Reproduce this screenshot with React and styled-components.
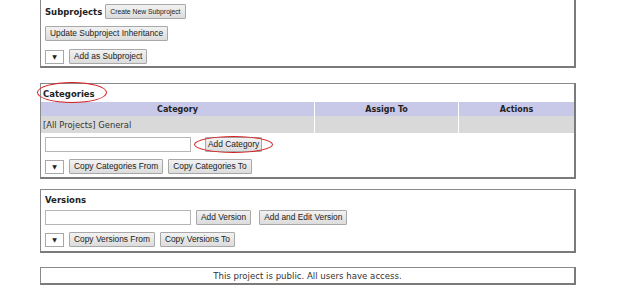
import styled, { createGlobalStyle } from "styled-components";

const GlobalStyle = createGlobalStyle`
  html, body {
    margin: 0;
    padding: 0;
    background: #fff;
  }
  body {
    font-family: "DejaVu Sans", Verdana, sans-serif;
    color: #222;
  }
`;

const Page = styled.div`
  width: 635px;
  height: 297px;
  overflow: hidden;
  padding-left: 40px;
  box-sizing: border-box;
`;

const Stack = styled.div`
  display: flex;
  flex-direction: column;
  width: 536px;
  margin-top: -1px;
`;

const Box = styled.div`
  box-sizing: border-box;
  border: 1px solid #8a8a8a;
  border-right: 2px solid #7a7a7a;
  border-bottom: 2px solid #7a7a7a;
  height: ${(p) => p.$h}px;
  margin-top: ${(p) => p.$gap || 0}px;
  display: flex;
  flex-direction: column;
`;

const Title = styled.div`
  position: relative;
  font-weight: bold;
  font-size: 8.5px;
  padding: ${(p) => p.$pad || "4px 4px 0"};
  display: flex;
  align-items: center;
  gap: 3px;
  height: ${(p) => p.$h || 16}px;
  box-sizing: border-box;
`;

const Row = styled.div`
  display: flex;
  align-items: center;
  gap: ${(p) => p.$gap || 6}px;
  padding: 0 4px;
  margin-top: ${(p) => p.$mt || 0}px;
  height: 15px;
`;

const Button = styled.button`
  position: relative;
  font-family: "Liberation Sans", Arial, sans-serif;
  font-size: ${(p) => (p.$small ? "6.8px" : "8.4px")};
  color: #222;
  height: 15px;
  padding: 0 ${(p) => (p.$tight ? 2 : 4)}px;
  margin-left: ${(p) => p.$ml || 0}px;
  border: 1px solid #a8a8a8;
  border-radius: 1px;
  background: linear-gradient(#f2f2f2, #dcdcdc);
  white-space: nowrap;
  line-height: 13px;
`;

const Select = styled.div`
  width: 19px;
  height: 14px;
  box-sizing: border-box;
  border: 1px solid #a8a8a8;
  background: #fff;
  font-size: 6px;
  display: flex;
  align-items: center;
  justify-content: center;
  color: #222;
`;

const Input = styled.div`
  width: 146px;
  height: 15px;
  box-sizing: border-box;
  border: 1px solid #b5b5b5;
  background: #fff;
`;

const Table = styled.div`
  display: grid;
  grid-template-columns: 273px 143px 1fr;
  column-gap: 1px;
  margin-top: 1px;
`;

const HeadCell = styled.div`
  background: #c8c8e8;
  height: 14px;
  font-size: 8px;
  font-weight: bold;
  display: flex;
  align-items: center;
  justify-content: center;
`;

const Cell = styled.div`
  background: #d9d9d9;
  height: 17px;
  font-size: 8.4px;
  display: flex;
  align-items: center;
  padding-left: 2px;
  color: #333;
`;

const Oval = styled.span`
  position: absolute;
  left: ${(p) => p.$l}px;
  top: ${(p) => p.$t}px;
  width: ${(p) => p.$w}px;
  height: ${(p) => p.$hh}px;
  border: 1.5px solid #d42020;
  border-radius: 50%;
  pointer-events: none;
`;

const Notice = styled.div`
  font-size: 8.6px;
  color: #333;
  display: flex;
  align-items: center;
  justify-content: center;
  height: 100%;
`;

export default function App() {
  return (
    <Page>
      <GlobalStyle />
      <Stack>
        <Box $h={69}>
          <Title $h={20} $pad="3px 4px 0">
            Subprojects <Button $small>Create New Subproject</Button>
          </Title>
          <Row $mt={6}>
            <Button>Update Subproject Inheritance</Button>
          </Row>
          <Row $mt={8} $gap={5}>
            <Select>▼</Select>
            <Button>Add as Subproject</Button>
          </Row>
        </Box>

        <Box $h={96} $gap={15}>
          <Title $h={17} $pad="2px 2px 0">
            Categories
            <Oval $l={-4} $t={-2} $w={68} $hh={19} />
          </Title>
          <Table>
            <HeadCell>Category</HeadCell>
            <HeadCell>Assign To</HeadCell>
            <HeadCell>Actions</HeadCell>
            <Cell>[All Projects] General</Cell>
            <Cell />
            <Cell />
          </Table>
          <Row $mt={4} $gap={0}>
            <Input />
            <Button $ml={8} $tight>
              Add Category
              <Oval $l={-12} $t={-2} $w={77} $hh={15} />
            </Button>
          </Row>
          <Row $mt={7} $gap={5}>
            <Select>▼</Select>
            <Button>Copy Categories From</Button>
            <Button>Copy Categories To</Button>
          </Row>
        </Box>

        <Box $h={64} $gap={10}>
          <Title $h={17} $pad="3px 4px 0">
            Versions
          </Title>
          <Row $mt={3} $gap={5}>
            <Input />
            <Button>Add Version</Button>
            <Button $ml={3}>Add and Edit Version</Button>
          </Row>
          <Row $mt={7} $gap={5}>
            <Select>▼</Select>
            <Button>Copy Versions From</Button>
            <Button>Copy Versions To</Button>
          </Row>
        </Box>

        <Box $h={18} $gap={14}>
          <Notice>This project is public. All users have access.</Notice>
        </Box>
      </Stack>
    </Page>
  );
}
